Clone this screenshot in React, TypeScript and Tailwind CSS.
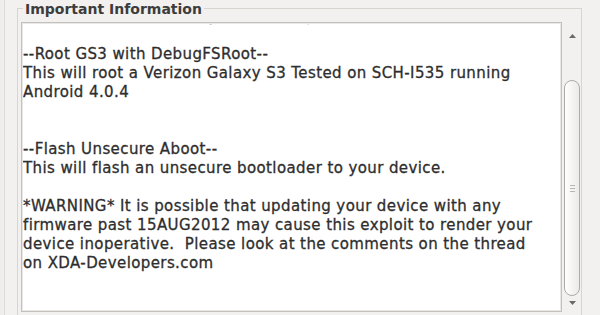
import React from "react";

const lines: string[] = [
  "--Details About Each Key and Setting--",
  "",
  "--Root GS3 with DebugFSRoot--",
  "This will root a Verizon Galaxy S3 Tested on SCH-I535 running",
  "Android 4.0.4",
  "",
  "",
  "--Flash Unsecure Aboot--",
  "This will flash an unsecure bootloader to your device.",
  "",
  "*WARNING* It is possible that updating your device with any",
  "firmware past 15AUG2012 may cause this exploit to render your",
  "device inoperative.  Please look at the comments on the thread",
  "on XDA-Developers.com",
  "",
  "",
];

export default function App() {
  return (
    <div
      className="w-[600px] h-[315px] overflow-hidden bg-[#f2f1f0] flex"
      style={{ fontFamily: '"DejaVu Sans", "Open Sans", sans-serif' }}
    >
      {/* left window edge */}
      <div className="w-[5px] h-full bg-[#efeeed] border-r border-[#dedcd9] shrink-0" />
      <div className="w-[12px] shrink-0" />
      {/* frame */}
      <div className="relative mt-[8px] w-[565px] h-[330px] border border-[#d8d5d0] shrink-0 pl-[3px] pt-[13px] flex items-start">
        <div className="absolute left-[5px] top-[-9px] px-[2px] bg-[#f2f1f0] text-[14px] leading-[18px] font-bold text-[#3c3c3c]">
          Important Information
        </div>
        {/* text area */}
        <div className="w-[541px] h-[290px] border border-[#c4c1bc] bg-white shrink-0">
          <div className="w-full h-full border border-[#e9e8e6] overflow-hidden">
            <div className="-mt-[17px] text-[15px] leading-[19px] tracking-[0.4px] text-[#2e2e2e] [-webkit-text-stroke:0.3px_#2e2e2e] whitespace-pre">
              {lines.map((l, i) => (
                <div key={i} className="h-[19px]">
                  {l}
                </div>
              ))}
            </div>
          </div>
        </div>
        {/* scrollbar */}
        <div className="w-[19px] h-[290px] flex flex-col items-center shrink-0">
          <div className="h-[16px] flex items-end justify-center pl-[1px]">
            <svg width="7" height="4" viewBox="0 0 7 4">
              <polygon points="0,4 7,4 3.5,0" fill="#6b6a68" />
            </svg>
          </div>
          <div className="h-[42px]" />
          <div className="w-[16px] ml-[1px] h-[216px] rounded-full border border-[#aeaba6] bg-gradient-to-r from-[#ffffff] to-[#eceae8] flex items-center justify-center">
            <div className="flex flex-col gap-[2px]">
              <div className="w-[5px] h-px bg-[#b8b5b0]" />
              <div className="w-[5px] h-px bg-[#b8b5b0]" />
              <div className="w-[5px] h-px bg-[#b8b5b0]" />
            </div>
          </div>
          <div className="h-[5px]" />
          <div className="flex justify-center pl-[1px]">
            <svg width="7" height="4" viewBox="0 0 7 4">
              <polygon points="0,0 7,0 3.5,4" fill="#6b6a68" />
            </svg>
          </div>
        </div>
      </div>
    </div>
  );
}
